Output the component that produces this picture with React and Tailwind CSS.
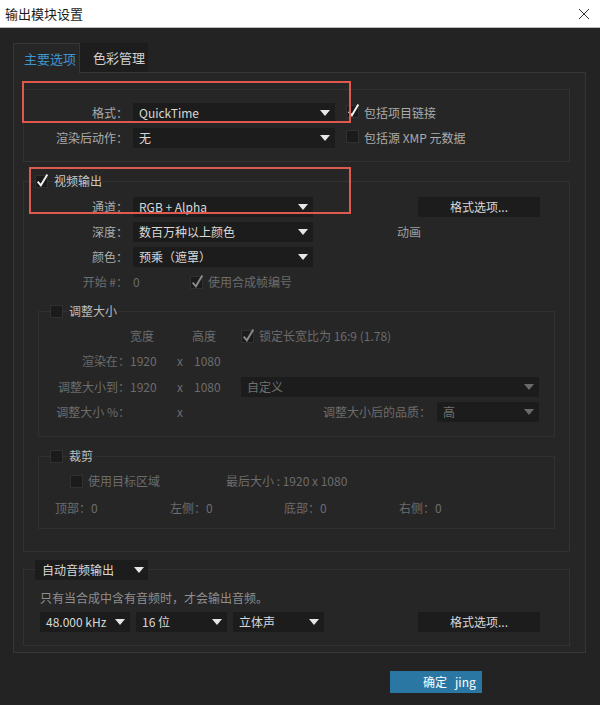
import React from 'react';

const Check = ({ checked, dim }) => (
  <span className="relative inline-block w-[13px] h-[13px] shrink-0 bg-[#1b1b1b] border border-[#303030]">
    {checked && (
      <svg viewBox="0 0 14 14" className="absolute -left-[1px] -top-[3px] w-[15px] h-[15px]">
        <path d="M2.5 8 L5.5 11.5 L11.5 1.5" fill="none" stroke={dim ? '#8a8a8a' : '#f2f2f2'} strokeWidth="1.8" />
      </svg>
    )}
  </span>
);

const Arrow = ({ dim }) => (
  <svg viewBox="0 0 10 6" className="w-[10px] h-[6px] shrink-0">
    <polygon points="0,0 10,0 5,6" fill={dim ? '#6a6a6a' : '#e6e6e6'} />
  </svg>
);

const Select = ({ value, width, dim, pr = 'pr-[5px]' }) => (
  <div className={`flex items-center h-[20px] bg-[#1c1c1c] pl-[6px] ${pr} ${width} ${dim ? 'text-[#707070]' : 'text-[#d8d8d8]'}`}>
    <span className="flex-1 whitespace-nowrap">{value}</span>
    <Arrow dim={dim} />
  </div>
);

const Button = ({ children }) => (
  <div className="flex items-center justify-center w-[122px] h-[20px] bg-[#1c1c1c] text-[#d8d8d8]">{children}</div>
);

const Label = ({ children, width = 'w-[104px]', dim }) => (
  <span className={`${width} text-right shrink-0 whitespace-nowrap ${dim ? 'text-[#6c6c6c]' : 'text-[#ababab]'}`}>{children}</span>
);

const App = () => {
  return (
    <div
      className="relative w-[600px] h-[705px] bg-[#232323] text-[12px] leading-[16px] overflow-hidden"
      style={{ fontFamily: '"Noto Sans CJK SC", "Noto Sans", sans-serif' }}
    >
      {/* title bar */}
      <div className="h-[28px] bg-white border-b border-[#bcbcbc] flex items-center justify-between pl-[5px] pr-[10px]">
        <span className="text-[13px] text-[#1a1a1a]">输出模块设置</span>
        <svg viewBox="0 0 12 12" className="w-[12px] h-[12px]">
          <path d="M1 1 L11 11 M11 1 L1 11" stroke="#333" strokeWidth="1" />
        </svg>
      </div>

      {/* tabs */}
      <div className="flex ml-[13px] mt-[15px] h-[29px] text-[13px]">
        <div className="w-[67px] h-[30px] bg-[#262626] border-t border-l border-r border-[#363636] flex items-center pl-[10px] text-[#3f95cf] relative z-10">主要选项</div>
        <div className="w-[68px] bg-[#1d1d1d] flex items-center pl-[13px] text-[#d0d0d0]">色彩管理</div>
      </div>

      {/* panel */}
      <div className="ml-[13px] w-[573px] h-[581px] border border-[#363636] bg-[#262626] pt-[16px] pl-[9px]">
        {/* format group */}
        <div className="w-[547px] h-[73px] border border-[#323232] pt-[13px] flex flex-col gap-[5px]">
          <div className="flex items-center h-[20px]">
            <Label>格式：</Label>
            <div className="ml-[5px]"><Select value="QuickTime" width="w-[202px]" /></div>
            <div className="ml-[11px]"><Check checked /></div>
            <span className="ml-[5px] text-[#ababab]">包括项目链接</span>
          </div>
          <div className="flex items-center h-[20px]">
            <Label>渲染后动作：</Label>
            <div className="ml-[5px]"><Select value="无" width="w-[202px]" /></div>
            <div className="ml-[11px]"><Check /></div>
            <span className="ml-[5px] text-[#ababab]">包括源 XMP 元数据</span>
          </div>
        </div>

        {/* video group */}
        <div className="mt-[19px] w-[547px] h-[371px] border border-[#323232]">
          <div className="flex items-center h-[14px] -mt-[8px] ml-[11px]">
            <Check checked />
            <span className="ml-[5px] px-[1px] bg-[#262626] text-[#c8c8c8]">视频输出</span>
          </div>
          <div className="mt-[9px] flex flex-col gap-[5px]">
            <div className="flex items-center h-[20px]">
              <Label>通道：</Label>
              <div className="ml-[5px]"><Select value="RGB + Alpha" width="w-[180px]" /></div>
              <div className="ml-[105px]"><Button>格式选项...</Button></div>
            </div>
            <div className="flex items-center h-[20px]">
              <Label>深度：</Label>
              <div className="ml-[5px]"><Select value="数百万种以上颜色" width="w-[180px]" /></div>
              <span className="ml-[84px] text-[#a0a0a0]">动画</span>
            </div>
            <div className="flex items-center h-[20px]">
              <Label>颜色：</Label>
              <div className="ml-[5px]"><Select value="预乘（遮罩）" width="w-[180px]" /></div>
            </div>
            <div className="flex items-center h-[20px]">
              <Label dim>开始 #：</Label>
              <span className="ml-[5px] w-[57px] text-[#6c6c6c]">0</span>
              <Check checked dim />
              <span className="ml-[5px] text-[#6c6c6c]">使用合成帧编号</span>
            </div>
          </div>

          {/* resize subgroup */}
          <div className="mt-[19px] ml-[14px] w-[517px] h-[126px] border border-[#303030] text-[#6c6c6c]">
            <div className="flex items-center h-[14px] -mt-[8px] ml-[11px]">
              <Check />
              <span className="ml-[5px] px-[1px] bg-[#262626] text-[#bdbdbd]">调整大小</span>
            </div>
            <div className="mt-[8px] flex flex-col">
              <div className="flex items-center h-[20px]">
                <span className="w-[91px]" />
                <span className="w-[47px]">宽度</span>
                <span className="w-[15px]" />
                <span className="w-[49px]">高度</span>
                <Check checked dim />
                <span className="ml-[5px]">锁定长宽比为 16:9 (1.78)</span>
              </div>
              <div className="flex items-center h-[20px] mt-[5px]">
                <Label width="w-[91px]" dim>渲染在：</Label>
                <span className="w-[47px]">1920</span>
                <span className="w-[17px]">x</span>
                <span className="w-[47px]">1080</span>
              </div>
              <div className="flex items-center h-[20px] mt-[6px]">
                <Label width="w-[91px]" dim>调整大小到：</Label>
                <span className="w-[47px]">1920</span>
                <span className="w-[17px]">x</span>
                <span className="w-[47px]">1080</span>
                <Select value="自定义" width="w-[298px]" dim />
              </div>
              <div className="flex items-center h-[20px] mt-[5px]">
                <Label width="w-[91px]" dim>调整大小 %：</Label>
                <span className="w-[47px]" />
                <span className="w-[17px]">x</span>
                <span className="w-[47px]" />
                <Label width="w-[190px]" dim>调整大小后的品质：</Label>
                <div className="ml-[6px]"><Select value="高" width="w-[102px]" dim /></div>
              </div>
            </div>
          </div>

          {/* crop subgroup */}
          <div className="mt-[19px] ml-[14px] w-[517px] h-[73px] border border-[#303030] text-[#6c6c6c]">
            <div className="flex items-center h-[14px] -mt-[8px] ml-[11px]">
              <Check />
              <span className="ml-[5px] px-[1px] bg-[#262626] text-[#bdbdbd]">裁剪</span>
            </div>
            <div className="mt-[8px] flex items-center h-[20px] ml-[31px]">
              <Check />
              <span className="ml-[5px] w-[138px]">使用目标区域</span>
              <span>最后大小 : 1920 x 1080</span>
            </div>
            <div className="mt-[7px] flex items-center h-[20px] ml-[16px]">
              <span className="w-[115px]">顶部：0</span>
              <span className="w-[114px]">左侧：0</span>
              <span className="w-[115px]">底部：0</span>
              <span className="w-[115px]">右侧：0</span>
            </div>
          </div>
        </div>

        {/* audio group */}
        <div className="mt-[17px] w-[547px] h-[77px] border border-[#323232]">
          <div className="-mt-[10px] ml-[11px] flex">
            <div className="flex items-center h-[20px] w-[113px] bg-[#1c1c1c] pl-[7px] pr-[4px] text-[#d8d8d8]">
              <span className="flex-1">自动音频输出</span>
              <Arrow />
            </div>
          </div>
          <div className="mt-[10px] ml-[16px] text-[#8e8e8e]">只有当合成中含有音频时，才会输出音频。</div>
          <div className="mt-[6px] ml-[16px] flex items-center">
            <Select value="48.000 kHz" width="w-[90px]" />
            <div className="ml-[6px]"><Select value="16 位" width="w-[91px]" /></div>
            <div className="ml-[6px]"><Select value="立体声" width="w-[91px]" /></div>
            <div className="ml-[94px]"><Button>格式选项...</Button></div>
          </div>
        </div>
      </div>

      {/* OK button */}
      <div className="ml-[390px] mt-[18px] w-[92px] h-[22px] bg-[#2b77a3] text-white flex items-center pl-[33px]">
        确定&nbsp;&nbsp;&nbsp;jing
      </div>

      {/* red highlight boxes */}
      <div className="absolute left-[22px] top-[81px] w-[329px] h-[42px] border-2 border-[#e0594f] pointer-events-none" />
      <div className="absolute left-[29px] top-[167px] w-[322px] h-[47px] border-2 border-[#e0594f] pointer-events-none" />
    </div>
  );
};

export default App;
